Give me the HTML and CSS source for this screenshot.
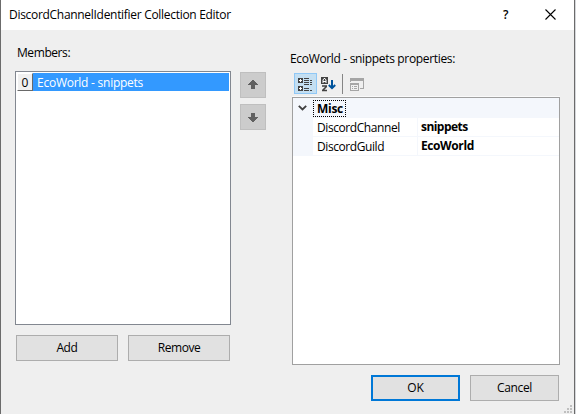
FILE: index.html
```html
<!DOCTYPE html>
<html lang="en">
<head>
<meta charset="utf-8">
<title>DiscordChannelIdentifier Collection Editor</title>
<link rel="stylesheet" href="styles.css">
</head>
<body>
<div class="dialog">
  <header class="titlebar">
    <span class="title">DiscordChannelIdentifier Collection Editor</span>
    <span class="help">?</span>
    <svg class="close" width="11" height="11" viewBox="0 0 11 11"><path d="M.5 .5l10 10M10.5 .5l-10 10" stroke="#000" stroke-width="1.1" fill="none"/></svg>
  </header>
  <main class="content">
    <section class="members">
      <div class="label"><span class="t-members">Members:</span></div>
      <div class="listbox">
        <div class="item"><span class="index">0</span><span class="t-item">EcoWorld - snippets</span></div>
      </div>
      <div class="list-actions">
        <button class="button"><span class="t-add">Add</span></button>
        <button class="button"><span class="t-remove">Remove</span></button>
      </div>
    </section>
    <div class="order">
      <button class="move"><svg width="10" height="10" viewBox="0 0 10 10" shape-rendering="crispEdges"><path d="M4 0h2v1h1v1h1v1h1v1h1v1H7v4H3V5H0V4h1V3h1V2h1V1h1z" fill="#606060"/></svg></button>
      <button class="move"><svg width="10" height="10" viewBox="0 0 10 10" shape-rendering="crispEdges"><path d="M3 1h4v4h3v1H9v1H8v1H7v1H6v1H4V9H3V8H2V7H1V6H0V5h3z" fill="#606060"/></svg></button>
    </div>
    <section class="properties">
      <div class="label"><span class="t-properties">EcoWorld - snippets properties:</span></div>
      <div class="toolbar">
        <button class="tool active"><svg width="16" height="16" viewBox="0 0 16 16"><path d="M1 2h5v5H1zM1 10h5v5H1z" fill="#424242"/><path d="M3 3h1v1h1v1H4v1H3V5H2V4h1zM3 11h1v1h1v1H4v1H3v-1H2v-1h1z" fill="#fff"/><path d="M7 2.5h5M7 4.500h5M7 6.500h5M7 8.500h5M13 4.500h2M13 6.500h2M13 8.500h2M7 12.500h5M7 14.500h5M13 14.500h2" stroke="#424242"/></svg></button>
        <button class="tool"><svg width="16" height="16" viewBox="0 0 16 16"><path d="M1 1h7v7H1z" fill="#424242"/><path d="M3 7V4l1-1.500h1L6 4v3M3 5.500h3" stroke="#fff" fill="none"/><path d="M2 10h5M6.500 10.500l-4 4M2 14.500h5" stroke="#424242" stroke-width="1.600" fill="none"/><path d="M12 4v8M8.800 9l3.200 3.200L15.200 9" stroke="#00539c" stroke-width="2" fill="none"/></svg></button>
        <span class="separator"></span>
        <button class="tool"><svg width="16" height="16" viewBox="0 0 16 16"><path d="M2 2h14v11h-4v-1h3V5H3v1H2zM2 7h9v8H2z" fill="#a5a5a5"/><path d="M3 9h7v5H3z" fill="#efefef"/><path d="M4 10.500h1m1 0h3M4 12.500h1m1 0h3" stroke="#a5a5a5"/></svg></button>
      </div>
      <div class="grid">
        <div class="category"><svg width="9" height="6" viewBox="0 0 9 6"><path d="M.8 .8l3.700 3.700L8.200 .8" stroke="#404040" stroke-width="1.800" fill="none"/></svg><span class="focus"><b class="t-misc">Misc</b></span></div>
        <div class="row"><span class="name"><span class="t-channel">DiscordChannel</span></span><b class="value"><span class="t-snippets">snippets</span></b></div>
        <div class="row"><span class="name"><span class="t-guild">DiscordGuild</span></span><b class="value"><span class="t-eco">EcoWorld</span></b></div>
      </div>
      <div class="dialog-actions">
        <button class="button default"><span class="t-ok">OK</span></button>
        <button class="button"><span class="t-cancel">Cancel</span></button>
      </div>
    </section>
  </main>
  <svg class="grip" width="8" height="8" viewBox="0 0 8 8"><path d="M6 0h2v2H6zM3 3h2v2H3zM6 3h2v2H6zM0 6h2v2H0zM3 6h2v2H3zM6 6h2v2H6z" fill="#bfbfbf"/></svg>
</div>
</body>
</html>
```
FILE: styles.css
```css
* { box-sizing: border-box; }
body {
  margin: 0;
  width: 576px;
  height: 414px;
  overflow: hidden;
  background: #d5d7da;
  color: #000;
  font: 12px/16px "Open Sans", "Noto Sans", sans-serif;
  white-space: nowrap;
}
button { font: inherit; color: inherit; margin: 0; padding: 0; }
svg { display: block; flex: none; }
.dialog {
  position: relative;
  width: 575px;
  height: 414px;
  border: solid #6b6b6b;
  border-width: 0 1px;
  background: #efefef;
}
.titlebar {
  display: flex;
  align-items: center;
  height: 30px;
  padding: 0 18px 2px 8px;
  background: #fff;
}
.title { flex: 1; padding-top: 2px; letter-spacing: -0.3px; }
.help { width: 8px; margin-right: 34px; padding-top: 1px; font-weight: 600; }
.content { display: flex; padding-left: 14px; }
.members { width: 216px; padding-top: 15px; }
.label { height: 26px; padding-left: 2px; }
.listbox { height: 254px; padding: 1px; border: 1px solid #828790; background: #fff; }
.item { display: flex; height: 18px; line-height: 19px; background: #3399ff; color: #fff; }
.index {
  width: 16px;
  margin-right: 4px;
  border: 1px solid;
  border-color: #fff #696969 #696969 #fff;
  background: #f0f0f0;
  color: #000;
  line-height: 17px;
  text-align: center;
}
.list-actions { display: flex; gap: 10px; padding: 10px 1px 0; }
.button {
  width: 102px;
  height: 26px;
  border: 1px solid #adadad;
  background: #e1e1e1;
  line-height: 24px;
}
.order { display: flex; flex-direction: column; gap: 6px; padding: 42px 0 0 9px; width: 61px; }
.move {
  display: flex;
  align-items: center;
  justify-content: center;
  width: 26px;
  height: 26px;
  border: 1px solid #bfbfbf;
  background: #ccc;
}
.properties { width: 268px; padding-top: 20px; }
.properties .label { height: 23px; padding: 1px 0 0; margin-left: -2px; }
.toolbar { display: flex; height: 24px; padding-left: 2px; box-shadow: inset 0 -1px #fafafa; }
.tool {
  display: flex;
  align-items: center;
  justify-content: center;
  width: 23px;
  height: 21px;
  padding-right: 2px;
  border: 1px solid transparent;
  background: none;
}
.tool.active { border-color: #90c8f6; background: #c4dff2; }
.separator { width: 1px; height: 20px; margin: 1px 2px 0 2px; background: #858585; }
.grid { height: 268px; border: 1px solid #a0a0a0; background: #fff; }
.category { display: flex; align-items: center; height: 20px; padding-left: 5px; background: #f4f7fc; }
.focus {
  width: 33px;
  height: 17px;
  margin-left: 6px;
  padding-left: 3px;
  border: 1px dotted #000;
  line-height: 16px;
}
.row { display: flex; height: 19px; line-height: 19px; border-left: 20px solid #f4f7fc; }
.name { width: 105px; padding-left: 4px; border: solid #f4f7fc; border-width: 0 1px 1px 0; }
.value { flex: 1; padding-left: 3px; border-bottom: 1px solid #f4f7fc; line-height: 17px; }
.dialog-actions { display: flex; justify-content: flex-end; gap: 10px; padding: 10px 1px 0 0; }
.dialog-actions .button { width: 89px; }
.button.default { border: 2px solid #0078d7; line-height: 22px; }
.t-members, .t-properties, .t-add, .t-cancel { letter-spacing: -0.35px; }
.t-item { letter-spacing: -0.25px; }
.t-properties { letter-spacing: -0.33px; }
.t-members, .t-channel, .t-guild, .t-remove { letter-spacing: -0.42px; }
.t-misc { letter-spacing: -0.3px; }
.t-snippets { letter-spacing: -0.55px; }
.t-eco { letter-spacing: -0.4px; }
.grip { position: absolute; right: 2px; bottom: 1px; }
```
